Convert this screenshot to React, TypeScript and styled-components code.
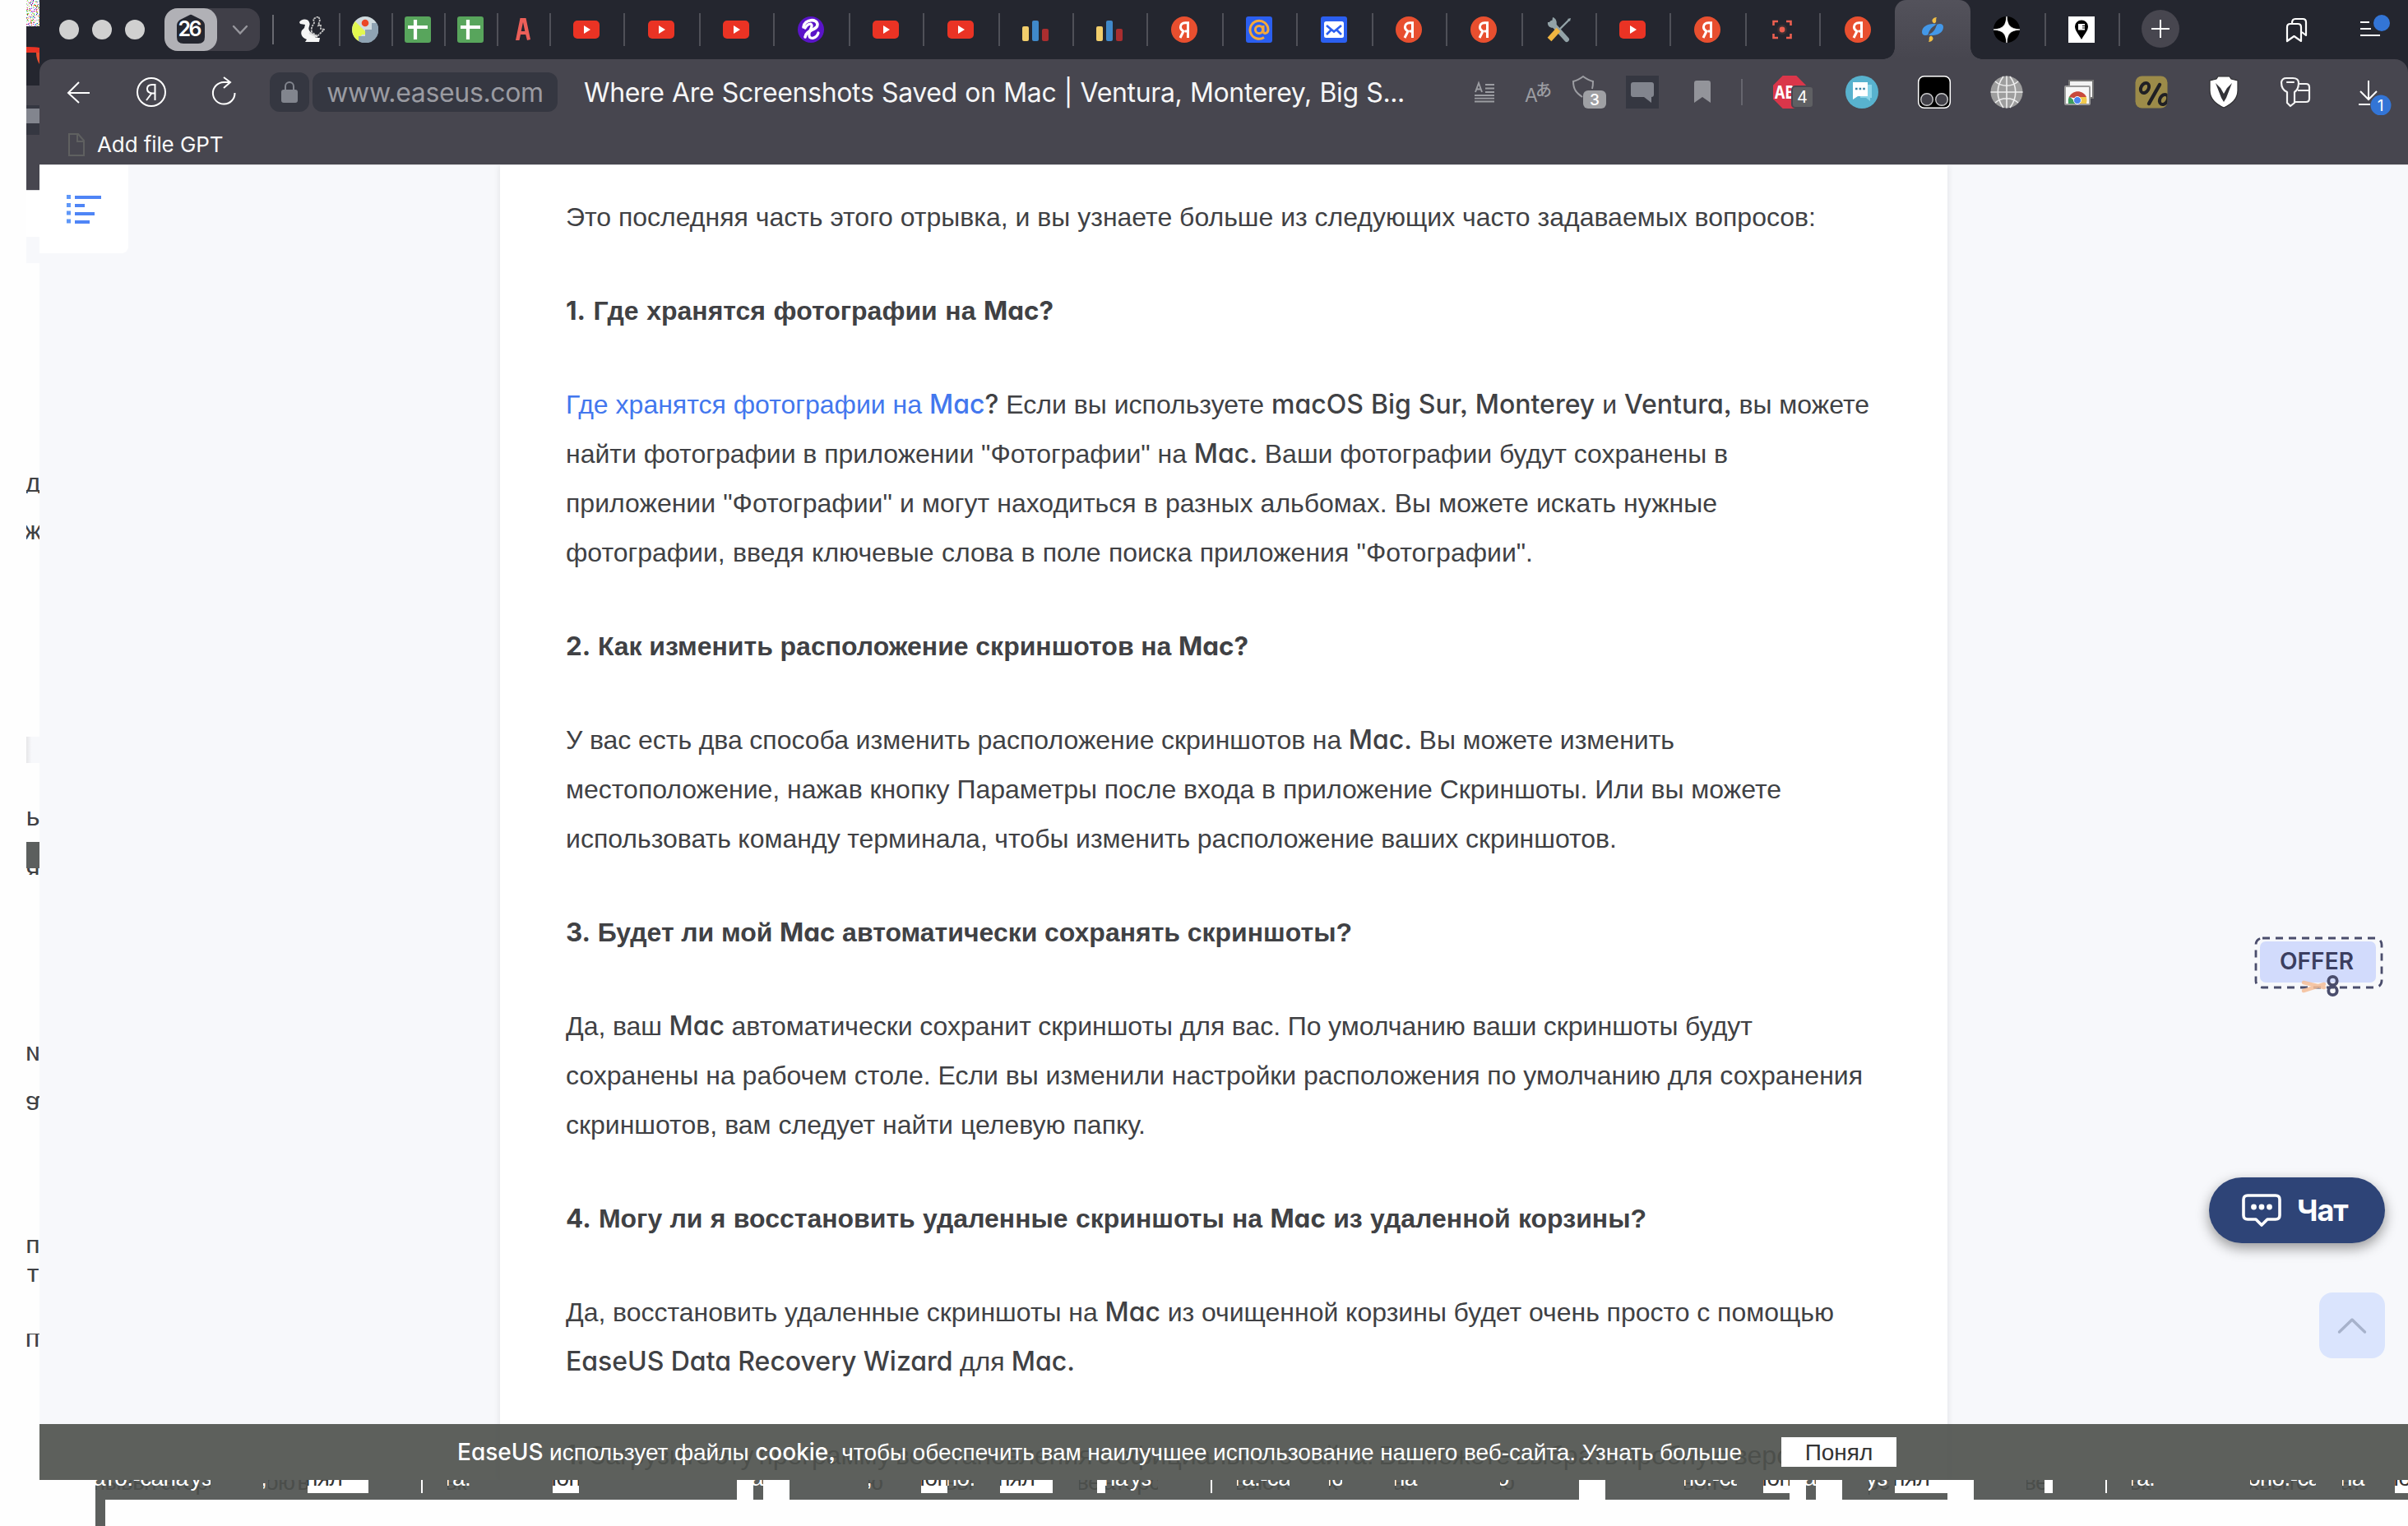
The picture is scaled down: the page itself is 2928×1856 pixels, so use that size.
import React from "react";
import styled, { createGlobalStyle } from "styled-components";

const UI = `Inter, "Liberation Sans", sans-serif`;
const BODY = `"Liberation Sans", Arial, sans-serif`;

const Global = createGlobalStyle`
  html, body { margin: 0; padding: 0; background: #fff; overflow: hidden; }
  * { box-sizing: border-box; }
`;

/* ---------- shell ---------- */

const Screen = styled.div`
  width: 2928px;
  height: 1856px;
  display: flex;
  flex-direction: column;
  background: #fefefe;
  overflow: hidden;
`;
const Upper = styled.div`
  display: flex;
  height: 1800px;
  padding-left: 32px;
`;
const Edge = styled.div`
  width: 16px;
  display: flex;
  flex-direction: column;
  overflow: hidden;
`;
const EdgePiece = styled.div<{ $h: number; $bg?: string }>`
  flex: none;
  height: ${(p) => p.$h}px;
  background: ${(p) => p.$bg || "transparent"};
  overflow: hidden;
  display: flex;
  align-items: center;
  justify-content: center;
`;
const EdgeGlyph = styled.span<{ $flip?: boolean }>`
  font: 32px/18px ${BODY};
  color: #404144;
  transform: ${(p) => (p.$flip ? "translateY(2px) scaleY(-1)" : "translateY(-2px)")};
`;
const Window = styled.div`
  width: 2880px;
  height: 1800px;
  display: flex;
  flex-direction: column;
  background: #24262f;
`;

/* ---------- tab strip ---------- */

const TabStrip = styled.div`
  height: 72px;
  display: flex;
  align-items: center;
`;
const Lights = styled.div`
  display: flex;
  gap: 16px;
  padding-left: 24px;
  width: 152px;
`;
const Light = styled.div`
  width: 24px;
  height: 24px;
  border-radius: 50%;
  background: #d0d0d0;
`;
const Counter = styled.div`
  width: 116px;
  height: 52px;
  border-radius: 16px;
  background: #403f48;
  display: flex;
  align-items: center;
`;
const CounterBox = styled.div`
  width: 64px;
  height: 52px;
  border-radius: 16px;
  background: #b1b1b6;
  display: grid;
  place-items: center;
`;
const CounterArrow = styled.div`
  flex: 1;
  display: grid;
  place-items: center;
  padding-left: 3px;
`;
const StripRule = styled.div`
  width: 2px;
  height: 36px;
  margin: 0 15px;
  background: #686970;
`;
const Tab = styled.div<{ $w: number; $rule?: boolean }>`
  width: ${(p) => p.$w}px;
  height: 72px;
  flex: none;
  display: flex;
  align-items: center;
  justify-content: center;
  background: ${(p) =>
    p.$rule === false
      ? "none"
      : "linear-gradient(#4f5058, #4f5058) right center / 2px 40px no-repeat"};
  padding-right: ${(p) => (p.$rule === false ? 0 : 4)}px;
`;
const ActiveTab = styled(Tab)`
  position: relative;
  background: linear-gradient(#53525b, #47464f);
  border-radius: 14px 14px 0 0;
  &::before,
  &::after {
    content: "";
    position: absolute;
    bottom: 0;
    width: 14px;
    height: 14px;
  }
  &::before {
    left: -14px;
    background: radial-gradient(circle at 0 0, transparent 13.5px, #47464f 14px);
  }
  &::after {
    right: -14px;
    background: radial-gradient(circle at 100% 0, transparent 13.5px, #47464f 14px);
  }
`;
const NewTab = styled.div`
  width: 46px;
  height: 46px;
  margin: 0 0 2px 26px;
  border-radius: 50%;
  background: #47464f;
  display: grid;
  place-items: center;
`;
const StripTools = styled.div`
  margin-left: auto;
  display: flex;
  gap: 48px;
  padding-right: 22px;
`;

/* ---------- toolbar ---------- */

const Toolbar = styled.div`
  height: 128px;
  background: #47464f;
  border-radius: 16px 16px 0 0;
  display: flex;
  flex-direction: column;
`;
const AddressRow = styled.div`
  height: 80px;
  display: flex;
  align-items: center;
`;
const NavSlot = styled.div<{ $w: number }>`
  width: ${(p) => p.$w}px;
  flex: none;
  display: flex;
  justify-content: center;
`;
const LockBox = styled.div`
  width: 48px;
  height: 48px;
  border-radius: 12px;
  background: #353741;
  display: grid;
  place-items: center;
`;
const UrlBox = styled.div`
  width: 298px;
  height: 48px;
  margin-left: 4px;
  border-radius: 12px;
  background: #353741;
  color: #9a9ba1;
  font: 32px/50px ${UI};
  letter-spacing: -0.35px;
  text-align: center;
  white-space: nowrap;
`;
const PageTitle = styled.div`
  width: 998px;
  margin: 2px 0 0 32px;
  color: #f6f6f7;
  font: 32px/48px ${UI};
  letter-spacing: -0.35px;
  word-spacing: -3px;
  text-align-last: justify;
  white-space: nowrap;
`;
const Actions = styled.div`
  display: flex;
  align-items: center;
  margin-left: auto;
`;
const ActionRule = styled.div`
  width: 2px;
  height: 32px;
  margin: 0 13px 0 7px;
  background: #66666e;
`;
const BookmarkRow = styled.div`
  display: flex;
  align-items: center;
  height: 32px;
  margin-top: 8px;
  padding-left: 34px;
  gap: 14px;
  color: #fafafa;
  font: 26px/32px ${UI};
  letter-spacing: -0.1px;
`;

/* ---------- page ---------- */

const Page = styled.div`
  position: relative;
  height: 1600px;
  border-top: 1px solid #dfdfe2;
  background: #f7f8fb;
  overflow: hidden;
  display: flex;
`;
const Contents = styled.div`
  width: 108px;
  height: 107px;
  background: #fff;
  border-radius: 0 0 8px 0;
  display: grid;
  place-items: center;
  padding-bottom: 2px;
`;
const Article = styled.article`
  width: 1760px;
  margin-left: 452px;
  padding: 33px 0 0 80px;
  background: #fff;
  box-shadow: 0 0 8px rgba(0, 0, 0, 0.1);
  color: #404144;
  font: 32px/60px ${BODY};
`;
const Para = styled.div<{ $bold?: boolean }>`
  margin-bottom: 54px;
  font-weight: ${(p) => (p.$bold ? 700 : 400)};
`;
const Line = styled.div<{ $w: number }>`
  width: ${(p) => p.$w}px;
  height: 60px;
  white-space: nowrap;
  word-spacing: -4px;
  text-align-last: justify;
`;
const Latin = styled.span<{ $bold?: boolean }>`
  font-family: Inter, ${BODY};
  font-feature-settings: "cv11" 1, "ss03" 1;
  font-weight: ${(p) => (p.$bold ? 700 : 500)};
  font-size: ${(p) => (p.$bold ? 0.98 : 1)}em;
  line-height: 1;
`;
const Link = styled.a`
  color: #4377ee;
`;
const Floating = styled.div`
  position: absolute;
  right: 28px;
  top: 935px;
  width: 240px;
  display: flex;
  flex-direction: column;
  align-items: flex-end;
`;
const Offer = styled.div`
  position: relative;
  width: 160px;
  height: 68px;
  margin-bottom: 228px;
  display: grid;
  place-items: center;
`;
const OfferArt = styled.svg`
  position: absolute;
  left: 0;
  top: 0;
  overflow: visible;
`;
const OfferText = styled.span`
  position: relative;
  color: #3b3e60;
  font: 600 28px/32px ${UI};
  letter-spacing: 0.1px;
  margin: 0 6px 2px 0;
`;
const Chat = styled.div`
  width: 214px;
  height: 80px;
  border-radius: 40px;
  background: #2e4477;
  box-shadow: 0 6px 16px rgba(0, 0, 0, 0.4);
  display: flex;
  align-items: center;
  padding-left: 39px;
  gap: 18px;
  color: #fff;
  font: 700 36px/80px ${UI};
  letter-spacing: -1px;
`;
const ToTop = styled.div`
  width: 80px;
  height: 80px;
  margin-top: 60px;
  border-radius: 16px;
  background: #dae4fd;
  display: grid;
  place-items: center;
`;
const Cookie = styled.div`
  position: absolute;
  left: 0;
  right: 0;
  bottom: 0;
  height: 68px;
  background: rgba(77, 80, 76, 0.91);
  display: flex;
  align-items: center;
  padding-left: 508px;
  color: #fff;
  font: 28px/68px ${BODY};
`;
const CookieText = styled.div`
  width: 1562px;
  padding-top: 1px;
  white-space: nowrap;
  word-spacing: -4px;
  text-align-last: justify;
`;
const CookieButton = styled.div`
  width: 140px;
  height: 36px;
  margin-left: 48px;
  background: #fff;
  color: #333;
  line-height: 37px;
  text-align: center;
`;

/* ---------- torn strip under the window ---------- */

const Torn = styled.div`
  height: 56px;
  padding-left: 116px;
  display: flex;
  flex-direction: column;
`;
const TornRow = styled.div`
  height: 24px;
  display: flex;
  background: #5c5f5d;
`;
const TornLeg = styled.div`
  width: 12px;
  height: 32px;
  background: #5c5f5d;
`;
const Piece = styled.div<{ $w: number; $kind: string }>`
  flex: none;
  position: relative;
  width: ${(p) => p.$w}px;
  height: ${(p) => (p.$kind === "chip" ? 16 : 24)}px;
  background: ${(p) => (p.$kind === "hole" || p.$kind === "chip" ? "#fff" : "none")};
  overflow: hidden;
  white-space: nowrap;
`;
const Shard = styled.span<{ $c: string; $top: number; $left?: number }>`
  position: absolute;
  left: ${(p) => p.$left ?? -3}px;
  top: ${(p) => p.$top}px;
  color: ${(p) => p.$c};
  font: 28px/32px ${BODY};
  letter-spacing: -0.6px;
  word-spacing: -4px;
`;

/* ---------- icons ---------- */

const Icon = ({ s, children, w }: { s: number; w?: number; children: React.ReactNode }) => (
  <svg width={s} height={s} viewBox={`${-s / 2} ${-s / 2} ${s} ${s}`} fill="none" strokeWidth={w}>
    {children}
  </svg>
);
const G = ({ children, ...p }: any) => <text fontFamily={UI} textAnchor="middle" {...p}>{children}</text>;

const YouTube = () => (
  <Icon s={32}>
    <rect x="-16" y="-11" width="32" height="22" rx="5" fill="#ea3324" />
    <path d="M-3 -5L5 0L-3 5Z" fill="#fff" />
  </Icon>
);
const Ya = () => (
  <Icon s={32}>
    <circle r="16" fill="#e84f2f" />
    <path d="M4.5 10V-8.3H1.2C-2.6 -8.3 -4.6 -6 -4.6 -3C-4.6 -.6 -3.2 .8 -1 2L-5 10M4.5 2H.8" stroke="#fff" strokeWidth="3" />
  </Icon>
);
const Bars = () => (
  <Icon s={32}>
    <rect x="-16" y="-4" width="8" height="18" rx="2" fill="#f2ce6c" />
    <rect x="-4" y="-11" width="8" height="25" rx="2" fill="#4089ca" />
    <rect x="8" y="-1" width="8" height="15" rx="2" fill="#aa2e2f" />
  </Icon>
);
const Sheet = () => (
  <Icon s={32}>
    <rect x="-16" y="-16" width="32" height="32" rx="3" fill="#58a55c" />
    <path d="M-12 -3H12M-3 -12V12" stroke="#fff" strokeWidth="4.2" />
  </Icon>
);
const Squirrel = () => (
  <Icon s={32}>
    <path d="M-15 -9C-13 -13 -5 -14 -3 -9C-1 -5 -5 -3 -3 1C-1 5 4 6 5 10L10 10L9 15H-8L-6 12C-12 10 -14 5 -12 1L-9 -2L-8 -6L-14 -7Z" fill="#f5f5f5" />
    <path d="M0 3C-1 -2 1 -5 3 -8L2 -13L8 -16L10 -12L8 -5L11 -6L11 -1L15 0L11 4L7 8Z" stroke="#c4c4c4" strokeWidth="1.8" strokeDasharray="2.5 1" />
    <path d="M-3 4L3 7L7 9" stroke="#dcdcdc" strokeWidth="2" />
  </Icon>
);
const MapPin = () => (
  <Icon s={32}>
    <circle r="16" fill="#d0dbdf" />
    <path d="M-12 -10L0 2V6H-4L-8 14A16 16 0 0 1 -12 -10Z" fill="#e3f84f" />
    <path d="M14 -8H8V0H0V8H-8V14A16 16 0 0 0 14 -8Z" fill="#8fa3b3" />
    <circle cx="0" cy="-8" r="4.3" fill="#eb4526" />
  </Icon>
);
const LetterA = () => (
  <Icon s={32}>
    <path d="M-9 13L-3.500 -14H3.500L9 12L5 13L3.200 6H-3L-4.500 13ZM-2.300 2H2.300L0 -9Z" fill="#ec5f59" fillRule="evenodd" />
  </Icon>
);
const Purple = () => (
  <Icon s={32}>
    <circle r="16" fill="#5a14c8" />
    <path d="M-9 -3C-8 -13 8 -14 8 -6C8 1 -6 0 -7 9" stroke="#fff" strokeWidth="3.600" strokeLinecap="round" />
    <path d="M-7 -2C-4 -8 2 -8 1 -4C0 0 -3 3 -2 8C-1 12 7 11 9 4" stroke="#fff" strokeWidth="3.200" strokeLinecap="round" />
  </Icon>
);
const At = () => (
  <Icon s={32}>
    <rect x="-16" y="-16" width="32" height="32" rx="3" fill="#2b5ff0" />
    <circle r="4.6" stroke="#f5a83a" strokeWidth="3" />
    <path d="M5 -5V2C5 6 11 5 11 0A11 11 0 1 0 6 9.5" stroke="#f5a83a" strokeWidth="3" />
  </Icon>
);
const MailIcon = () => (
  <Icon s={32}>
    <rect x="-16" y="-16" width="32" height="32" rx="3" fill="#2b5ff0" />
    <rect x="-12" y="-10" width="24" height="20" rx="2.5" fill="#fff" />
    <path d="M-9 -5L0 2.5L9 -5M-9 6L-3 0M9 6L3 0" stroke="#2b5ff0" strokeWidth="2.6" />
  </Icon>
);
const Tools = () => (
  <Icon s={32}>
    <path d="M-8 -8L10 12" stroke="#93a3a8" strokeWidth="6" strokeLinecap="round" />
    <path d="M-13 -9C-14 -3 -7 0 -3 -4C-1 -9 -3 -14 -7 -15L-8 -9Z" fill="#93a3a8" />
    <path d="M0 1L13 -12" stroke="#93a3a8" strokeWidth="2.4" />
    <path d="M11 -13L15 -14L14 -10Z" fill="#93a3a8" />
    <path d="M0 0L-11 12" stroke="#f0b541" strokeWidth="6.5" />
  </Icon>
);
const Scan = () => (
  <Icon s={32}>
    <circle r="6" fill="#3c3033" />
    <circle r="3.4" fill="#ec5f50" />
    <path d="M-10.500 -5V-10H-5M5 -10H10.500V-5M10.500 5V10H5M-5 10H-10.500V5" stroke="#ec5f50" strokeWidth="2.6" />
  </Icon>
);
const Swirl = () => (
  <Icon s={32}>
    <path d="M-13 3C-13 -5 -2 -9 6 -6C-1 -4 -3 0 -5 6C-9 8 -13 7 -13 3Z" fill="#4398e8" />
    <path d="M13 -3C13 5 2 9 -6 6C1 4 3 0 5 -6C9 -8 13 -7 13 -3Z" fill="#4398e8" />
    <path d="M-5 6C-3 0 -1 -2 5 -6" stroke="#4f4e57" strokeWidth="1.200" />
    <path d="M5 -15C0 -15 -3 -10 2 -7.500C6 -9 3 -12 5 -15ZM-5 15C0 15 3 10 -2 7.500C-6 9 -3 12 -5 15Z" fill="#efbd45" />
  </Icon>
);
const Star = () => (
  <Icon s={32}>
    <circle r="16" fill="#000" />
    <path d="M0 -16C1 -5 4 -1 16 0C4 1 1 5 0 16C-1 5 -4 1 -16 0C-4 -1 -1 -5 0 -16Z" fill="#fff" stroke="#fff" strokeWidth=".8" />
  </Icon>
);
const EPin = () => (
  <Icon s={32}>
    <rect x="-16" y="-16" width="32" height="32" fill="#fff" />
    <path d="M0 12C-4 5 -8 1 -8 -4A8 7.500 0 0 1 8 -4C8 1 4 5 0 12Z" fill="#000" />
    <path d="M-4 -7H4V-5H1V-4H4V-2.500H1V-1.500H4V.5H-4Z" fill="#fff" />
  </Icon>
);

const tabs: { w: number; icon: React.ReactNode; rule?: boolean; active?: boolean }[] = [
  { w: 66, icon: <Squirrel /> },
  { w: 64, icon: <MapPin /> },
  { w: 64, icon: <Sheet /> },
  { w: 64, icon: <Sheet /> },
  { w: 64, icon: <LetterA /> },
  { w: 90, icon: <YouTube /> },
  { w: 92, icon: <YouTube /> },
  { w: 90, icon: <YouTube /> },
  { w: 92, icon: <Purple /> },
  { w: 90, icon: <YouTube /> },
  { w: 92, icon: <YouTube /> },
  { w: 90, icon: <Bars /> },
  { w: 90, icon: <Bars /> },
  { w: 92, icon: <Ya /> },
  { w: 90, icon: <At /> },
  { w: 92, icon: <MailIcon /> },
  { w: 90, icon: <Ya /> },
  { w: 92, icon: <Ya /> },
  { w: 90, icon: <Tools /> },
  { w: 90, icon: <YouTube /> },
  { w: 92, icon: <Ya /> },
  { w: 90, icon: <Scan /> },
  { w: 90, icon: <Ya />, rule: false },
  { w: 92, icon: <Swirl />, active: true },
  { w: 92, icon: <Star /> },
  { w: 90, icon: <EPin /> },
];

const actions: { w: number; icon: React.ReactNode }[] = [
  {
    w: 64,
    icon: (
      <Icon s={44}>
        <path d="M-11 0L-7 -11L-3 0M-10 -3.500H-4" stroke="#9c9da2" strokeWidth="1.900" />
        <path d="M1 -9H12M1 -4.500H12M1 0H12M-12 4H12M-12 7.700H12M-12 11.500H12" stroke="#9c9da2" strokeWidth="1.800" />
      </Icon>
    ),
  },
  {
    w: 64,
    icon: (
      <Icon s={44}>
        <G x="-7" y="12" fontSize="23" fill="#9c9da2">A</G>
        <text x="-2" y="4.500" fontSize="20" fontFamily="'Noto Sans CJK JP', sans-serif" fontWeight="500" fill="#9c9da2">あ</text>
      </Icon>
    ),
  },
  {
    w: 64,
    icon: (
      <Icon s={48}>
        <path d="M-9 6C-16 1 -20 -3 -20 -13C-15 -14 -12 -16 -8 -19C-4 -16 -1 -14 4 -13C4 -9 4 -7 3 -4" stroke="#9c9da2" strokeWidth="2" />
        <rect x="-8" y="-2" width="28" height="22" rx="6" fill="#9fa0a4" />
        <G x="6" y="16" fontSize="19" fontWeight="500" fill="#fff">3</G>
      </Icon>
    ),
  },
  {
    w: 64,
    icon: (
      <Icon s={40}>
        <rect x="-20" y="-20" width="40" height="40" fill="#353741" />
        <path d="M-11 -12H11Q14 -12 14 -9V3Q14 6 11 6V13L2 6H-11Q-14 6 -14 3V-9Q-14 -12 -11 -12Z" fill="#82858e" />
      </Icon>
    ),
  },
  {
    w: 81,
    icon: (
      <Icon s={44}>
        <path d="M-7 -14H7Q10 -14 10 -11V13L0 6L-10 13V-11Q-10 -14 -7 -14Z" fill="#93949a" />
      </Icon>
    ),
  },
];

const extensions: React.ReactNode[] = [
  <Icon s={56} key="abp">
    <path d="M-8.300 -20H8.300L20 -8.300V8.300L8.300 20H-8.300L-20 8.300V-8.300Z" fill="#da364a" />
    <G x="-6" y="8" fontSize="22" fontWeight="700" textLength="25" lengthAdjust="spacingAndGlyphs" fill="#fff">AB</G>
    <rect x="3" y="-7" width="26" height="26" rx="4" fill="#5f6063" stroke="#47464f" strokeWidth="2" />
    <G x="15.500" y="13" fontSize="20" fill="#fff">4</G>
  </Icon>,
  <Icon s={44} key="chat">
    <circle r="20" fill="#58b2ce" />
    <path d="M-2 -9H12V7H10V11L5 7H-2Z" fill="#8ad4e8" />
    <path d="M-11 -12H7V5H-5L-11 9Z" fill="#fff" />
    <path d="M-8 -4H4" stroke="#3d86a6" strokeWidth="2.600" strokeDasharray="2.600 2" />
  </Icon>,
  <Icon s={44} key="tamper">
    <rect x="-19.300" y="-19.300" width="38.600" height="38.600" rx="7" fill="#000" stroke="#fff" strokeWidth="1.500" />
    <circle cx="-9" cy="9" r="7.300" fill="#414048" stroke="#c9c9cb" strokeWidth="1.400" />
    <circle cx="9" cy="9" r="7.300" fill="#414048" stroke="#c9c9cb" strokeWidth="1.400" />
  </Icon>,
  <Icon s={44} key="globe">
    <circle r="19.500" fill="#9e9e9e" />
    <path d="M0 -19.500V19.500M-19.500 0H19.500M-14 -13C-6 -6 6 -6 14 -13M-14 13C-6 6 6 6 14 13M-4 -19C-13 -7 -13 7 -4 19M4 -19C13 -7 13 7 4 19" stroke="#ededed" strokeWidth="1.600" />
  </Icon>,
  <Icon s={44} key="capture">
    <rect x="-12" y="-14" width="29" height="21" fill="#f2f2f2" stroke="#737373" strokeWidth="2" />
    <rect x="-17" y="-7" width="30" height="22" rx="1" fill="#f7f7f7" stroke="#9a9a9a" strokeWidth="2" />
    <path d="M-13 14A10 13 0 0 1 -12 5L-2 14Z" fill="#3f9e5c" />
    <path d="M-12 6C-8 -3 5 -3 9 6L-2 8Z" fill="#c8493c" />
    <path d="M0 6H9Q10 10 9 14H0Z" fill="#f0c84b" />
    <circle cx="-2" cy="10" r="4.500" fill="#4c84f0" stroke="#fff" strokeWidth="1" />
  </Icon>,
  <Icon s={44} key="percent">
    <clipPath id="pc"><rect x="-19.500" y="-19.500" width="39" height="39" rx="8" /></clipPath>
    <g clipPath="url(#pc)">
      <rect x="-20" y="-20" width="40" height="40" fill="#9c8b49" />
      <ellipse cx="-8" cy="-5" rx="4.600" ry="6.500" transform="rotate(30 -8 -5)" stroke="#202024" strokeWidth="4" />
      <ellipse cx="15" cy="9" rx="4.600" ry="6.500" transform="rotate(30 15 9)" stroke="#202024" strokeWidth="4" />
      <path d="M10 -9L-3 14" stroke="#202024" strokeWidth="4.400" strokeLinecap="round" />
    </g>
  </Icon>,
  <Icon s={44} key="shield">
    <path d="M-7 -19H7L9 -16L17 -14V-2C17 8 9 15 0 19C-9 15 -17 8 -17 -2V-14L-9 -16Z" fill="#fff" stroke="#2e2e31" strokeWidth="1.200" />
    <path d="M-10 -11L-4 -5L0 2L4 -5L10 -11L3 7L0 12L-3 7Z" fill="#333338" />
  </Icon>,
  <Icon s={44} key="key">
    <path d="M-12 -17H-4Q3 -17 3 -11C3 -5 1 -2 -2 0V13L-7 17L-11 13V0C-16 -2 -18 -7 -18 -12Q-17 -17 -12 -17ZM-11 -12H-3" stroke="#f4f4f4" strokeWidth="2.200" strokeLinejoin="round" strokeLinecap="round" />
    <path d="M4 -10H12Q16 -10 16 -6V8Q16 12 12 12H-1M2 -2H16" stroke="#f4f4f4" strokeWidth="2.200" />
  </Icon>,
];

/* ---------- content ---------- */

const article: { bold?: boolean; lines: [number, string][] }[] = [
  { lines: [[1520, "Это последняя часть этого отрывка, и вы узнаете больше из следующих часто задаваемых вопросов:"]] },
  { bold: true, lines: [[593, "1. Где хранятся фотографии на Mac?"]] },
  {
    lines: [
      [1585, "[Где хранятся фотографии на Mac]? Если вы используете macOS Big Sur, Monterey и Ventura, вы можете"],
      [1413, "найти фотографии в приложении \"Фотографии\" на Mac. Ваши фотографии будут сохранены в"],
      [1400, "приложении \"Фотографии\" и могут находиться в разных альбомах. Вы можете искать нужные"],
      [1176, "фотографии, введя ключевые слова в поле поиска приложения \"Фотографии\"."],
    ],
  },
  { bold: true, lines: [[830, "2. Как изменить расположение скриншотов на Mac?"]] },
  {
    lines: [
      [1348, "У вас есть два способа изменить расположение скриншотов на Mac. Вы можете изменить"],
      [1478, "местоположение, нажав кнопку Параметры после входа в приложение Скриншоты. Или вы можете"],
      [1278, "использовать команду терминала, чтобы изменить расположение ваших скриншотов."],
    ],
  },
  { bold: true, lines: [[956, "3. Будет ли мой Mac автоматически сохранять скриншоты?"]] },
  {
    lines: [
      [1443, "Да, ваш Mac автоматически сохранит скриншоты для вас. По умолчанию ваши скриншоты будут"],
      [1577, "сохранены на рабочем столе. Если вы изменили настройки расположения по умолчанию для сохранения"],
      [705, "скриншотов, вам следует найти целевую папку."],
    ],
  },
  { bold: true, lines: [[1314, "4. Могу ли я восстановить удаленные скриншоты на Mac из удаленной корзины?"]] },
  {
    lines: [
      [1542, "Да, восстановить удаленные скриншоты на Mac из очищенной корзины будет очень просто с помощью"],
      [619, "EaseUS Data Recovery Wizard для Mac."],
    ],
  },
  { lines: [[1530, "1. Загрузите эту программу восстановления с официального сайта. Вы можете выбрать пробную версию"]] },
];

/* Latin words with their punctuation use the Latin face; Cyrillic keeps the body face. */
const mix = (t: string, bold?: boolean) =>
  t.split(/([A-Za-z0-9]+[.,?]*|^\?)/).map((s, i) => (i % 2 ? <Latin key={i} $bold={bold}>{s}</Latin> : s));

const RichLine = ({ text, bold }: { text: string; bold?: boolean }) => {
  const m = text.match(/^\[(.*)\](.*)$/);
  if (!m) return <>{mix(text, bold)}</>;
  return (
    <>
      <Link>{mix(m[1], bold)}</Link>
      {mix(m[2], bold)}
    </>
  );
};

/* [width, kind, light text, dark text underneath] */
const torn: [number, string, string?, string?][] = [
  [140, "ink", "ато.-сана уз", "пывыт аторс"], [64, "ink"], [6, "ink", ","], [48, "ink", "", "ою ве"],
  [74, "chip", "нял"], [64, "ink"], [2, "chip"], [30, "ink"], [32, "ink", "га.", "вк"], [96, "ink"], [32, "chip", "Пон"],
  [192, "ink"], [20, "hole"], [12, "ink", "а"], [32, "hole"], [96, "ink"],
  [24, "ink", ",", "ю"], [40, "ink"], [32, "chip", "Пон"], [32, "ink", "по.", "вы"], [32, "ink"], [64, "chip", "нял"],
  [32, "ink"], [22, "ink", "", "ве"], [10, "chip"], [64, "ink", "на уз", "аторс"], [64, "ink"], [2, "chip"], [30, "ink"],
  [64, "ink", "га.-са", "высто"], [48, "ink"], [16, "ink", "ю", "х"], [64, "ink"], [32, "ink", "на", "ат"], [96, "ink"],
  [24, "ink", "э", "ю"], [72, "ink"], [32, "hole"], [96, "ink"], [64, "ink", "по.-са", "выто"], [32, "ink"],
  [32, "chip", "Пон"], [20, "hole"], [12, "ink", "а"], [32, "hole"], [32, "ink"], [32, "ink", "уз", "рс"], [64, "chip", "нял"],
  [32, "hole"], [64, "ink"], [22, "ink", "", "ве"], [10, "chip"], [64, "ink"], [2, "chip"], [30, "ink"],
  [32, "ink", "га.", "вк"], [112, "ink"], [80, "ink", "опо.-са", "хвыто"], [32, "ink"], [32, "ink", "на", "ат"], [32, "ink"],
  [16, "chip", "Пон"],
];

const specks = (() => {
  const out: React.ReactNode[] = [];
  let n = 7;
  const rnd = () => (n = (n * 16807) % 2147483647) / 2147483647;
  for (let y = 0; y < 32; y++)
    for (let x = 0; x < 16; x++) {
      const hue = Math.floor(rnd() * 360);
      const light = 40 + Math.floor(rnd() * 130);
      out.push(<rect key={`${x}-${y}`} x={x} y={y} width="1" height="1" fill={`hsl(${hue} 80% ${Math.min(light, 100)}%)`} />);
    }
  return out;
})();

/* [height, background, glyph, mirrored] */
const edge: [number, string?, string?, boolean?][] = [
  [25, "#24262f"], [24, "#47464f"], [4, "#353741"], [18, "#82858e"], [14, "#353741"], [67, "#47464f"], [1, "#dfdfe2"],
  [56, "#fff"], [32, "#f7f8fb"], [258], [22, "", "д"], [38], [18, "", "ж"], [240],
  [32, "linear-gradient(90deg,#e6e6e8,#f7f8fb 40%)"], [58], [18, "", "ь"], [20], [32, "#5c5f5e"], [8, "", "я"],
  [209], [18, "", "й", true], [42], [18, "", "а", true], [157], [16, "", "п"], [18], [17, "", "т"], [63], [16, "", "ц", true],
];

export default function App() {
  return (
    <>
      <Global />
      <Screen>
        <Upper>
          <Edge>
            <EdgePiece $h={32} $bg="#fff">
              <svg width="16" height="32" shapeRendering="crispEdges">{specks}</svg>
            </EdgePiece>
            <EdgePiece $h={47} $bg="#24262f">
              <svg width="16" height="47">
                <path d="M0 25Q10 25 16 26V32H0Z" fill="#ea3324" />
                <path d="M12 32H16V46Q12 40 12 32Z" fill="#e84f2f" />
              </svg>
            </EdgePiece>
            {edge.map(([h, bg, ch, flip], i) => (
              <EdgePiece key={i} $h={h} $bg={bg}>{ch && <EdgeGlyph $flip={flip}>{ch}</EdgeGlyph>}</EdgePiece>
            ))}
          </Edge>
          <Window>
            <TabStrip>
              <Lights><Light /><Light /><Light /></Lights>
              <Counter>
                <CounterBox>
                  <Icon s={40}>
                    <path d="M-2 -17.500Q0 -19 2 -17.500L13 -12Q17 -9 17 -5V9Q17 17 9 17H-9Q-17 17 -17 9V-5Q-17 -9 -13 -12Z" fill="#24262f" />
                    <G x="-1" y="8" fontSize="25" fontWeight="600" textLength="29" fill="#fff">26</G>
                  </Icon>
                </CounterBox>
                <CounterArrow>
                  <Icon s={24}><path d="M-8 -4L0 4.500L8 -4" stroke="#97979d" strokeWidth="2.400" strokeLinecap="round" /></Icon>
                </CounterArrow>
              </Counter>
              <StripRule />
              {tabs.map((t, i) =>
                t.active ? (
                  <ActiveTab key={i} $w={t.w} $rule={false}>{t.icon}</ActiveTab>
                ) : (
                  <Tab key={i} $w={t.w} $rule={t.rule}>{t.icon}</Tab>
                )
              )}
              <NewTab>
                <Icon s={24}><path d="M-11 0H11M0 -11V11" stroke="#fff" strokeWidth="2" /></Icon>
              </NewTab>
              <StripTools>
                <Icon s={44}>
                  <path d="M-11 14V-3Q-11 -7 -7 -7H2Q6 -7 6 -3V14L-2.500 8Z" stroke="#fff" strokeWidth="2.200" strokeLinejoin="round" />
                  <path d="M-5 -8Q-5 -13 -1 -13H8Q12 -13 12 -9V7L7 3" stroke="#fff" strokeWidth="2.200" strokeLinejoin="round" />
                </Icon>
                <Icon s={44}>
                  <path d="M-14 -9H-3M-14 -1H-1M-14 7H10" stroke="#fff" strokeWidth="2.200" />
                  <circle cx="12" cy="-8" r="10" fill="#3375d6" />
                </Icon>
              </StripTools>
            </TabStrip>
            <Toolbar>
              <AddressRow>
                <NavSlot $w={96}>
                  <Icon s={44}><path d="M13 1H-13M0 -12L-13 1L0 13" stroke="#fff" strokeWidth="2" /></Icon>
                </NavSlot>
                <NavSlot $w={80}>
                  <Icon s={44}>
                    <circle r="17" stroke="#fff" strokeWidth="2" />
                    <path d="M4.500 10V-9H1C-3 -9 -5 -7 -5 -4C-5 -1 -3 1 1 1.500H4.500M0 2L-6 10" stroke="#fff" strokeWidth="2" />
                  </Icon>
                </NavSlot>
                <NavSlot $w={104}>
                  <Icon s={44}>
                    <path d="M9.500 1A13.300 13.300 0 1 1 -4 -12H3M-4 -18L4 -12L-4 -5" stroke="#fff" strokeWidth="2" />
                  </Icon>
                </NavSlot>
                <LockBox>
                  <Icon s={32}>
                    <path d="M-5 -3V-7A5 5 0 0 1 5 -7V-3" stroke="#82858e" strokeWidth="2" />
                    <rect x="-10" y="-3" width="20" height="16" rx="3" fill="#82858e" />
                  </Icon>
                </LockBox>
                <UrlBox>www.easeus.com</UrlBox>
                <PageTitle>Where Are Screenshots Saved on Mac | Ventura, Monterey, Big S...</PageTitle>
                <Actions>
                  {actions.map((a, i) => <NavSlot key={i} $w={a.w}>{a.icon}</NavSlot>)}
                  <ActionRule />
                  {extensions.map((e, i) => <NavSlot key={i} $w={88}>{e}</NavSlot>)}
                  <NavSlot $w={92}>
                    <Icon s={56}>
                      <path d="M-2 -14V8M-12 -1L-2 9L8 -1M-14 15H0" stroke="#fff" strokeWidth="2" />
                      <circle cx="13" cy="16" r="12.500" fill="#3375d6" />
                      <G x="12.500" y="22.500" fontSize="19" fill="#fff">1</G>
                    </Icon>
                  </NavSlot>
                </Actions>
              </AddressRow>
              <BookmarkRow>
                <svg width="22" height="28" fill="none" stroke="#5f6060" strokeWidth="2">
                  <path d="M2 1H13L20 9V27H2ZM12 1V10H20" />
                </svg>
                Add file GPT
              </BookmarkRow>
            </Toolbar>
            <Page>
              <Contents>
                <Icon s={44}>
                  <path d="M-21 -14.500H-16M-21 -4.500H-16M-21 5H-16M-21 15H-16" stroke="#6098f8" strokeWidth="5" />
                  <path d="M-11 -14H21M-11 -4H1M-11 6H13M-11 16H7" stroke="#4f85f6" strokeWidth="4" />
                </Icon>
              </Contents>
              <Article>
                {article.map((p, i) => (
                  <Para key={i} $bold={p.bold}>
                    {p.lines.map(([w, t]) => (
                      <Line key={t} $w={w}><RichLine text={t} bold={p.bold} /></Line>
                    ))}
                  </Para>
                ))}
              </Article>
              <Floating>
                <Offer>
                  <OfferArt width="160" height="80" fill="none">
                    <rect x="8" y="9" width="141" height="50" rx="7" fill="#d2dbfc" />
                    <rect x="3" y="5" width="153" height="60" rx="8" stroke="#4a4d6c" strokeWidth="2.800" strokeDasharray="9 7" />
                    <path d="M61 59L86 65M61 69L86 61" stroke="#f5bd97" strokeWidth="4.500" strokeLinecap="round" opacity=".85" />
                    <circle cx="96.500" cy="57" r="5.200" stroke="#4a4d6c" strokeWidth="3.800" />
                    <circle cx="96.500" cy="69" r="5.200" stroke="#4a4d6c" strokeWidth="3.800" />
                  </OfferArt>
                  <OfferText>OFFER</OfferText>
                </Offer>
                <Chat>
                  <svg width="50" height="42" fill="none" stroke="#fff" strokeWidth="3.600" strokeLinejoin="round">
                    <path d="M8 3H42Q47 3 47 8V27Q47 32 42 32H32L25 39L18 32H8Q3 32 3 27V8Q3 3 8 3Z" />
                    <g fill="#fff" stroke="none"><circle cx="15.500" cy="17" r="3.400" /><circle cx="25" cy="17" r="3.400" /><circle cx="34.500" cy="17" r="3.400" /></g>
                  </svg>
                  Чат
                </Chat>
                <ToTop>
                  <Icon s={40}><path d="M-15.500 8L0 -7L15.500 8" stroke="#a7b2cb" strokeWidth="3.400" strokeLinecap="round" strokeLinejoin="round" /></Icon>
                </ToTop>
              </Floating>
              <Cookie>
                <CookieText>{mix("EaseUS использует файлы cookie, чтобы обеспечить вам наилучшее использование нашего веб-сайта. Узнать больше")}</CookieText>
                <CookieButton>Понял</CookieButton>
              </Cookie>
            </Page>
          </Window>
        </Upper>
        <Torn>
          <TornRow>
            {torn.map(([w, kind, light, dark], i) => (
              <Piece key={i} $w={w} $kind={kind}>
                {dark && <Shard $c="#4b4e4b" $top={-13}>{dark}</Shard>}
                {light && (
                  <Shard $c={kind === "chip" ? "#333" : "#fff"} $top={-18} $left={light === "Пон" ? -15 : -3}>
                    {light}
                  </Shard>
                )}
              </Piece>
            ))}
          </TornRow>
          <TornLeg />
        </Torn>
      </Screen>
    </>
  );
}
